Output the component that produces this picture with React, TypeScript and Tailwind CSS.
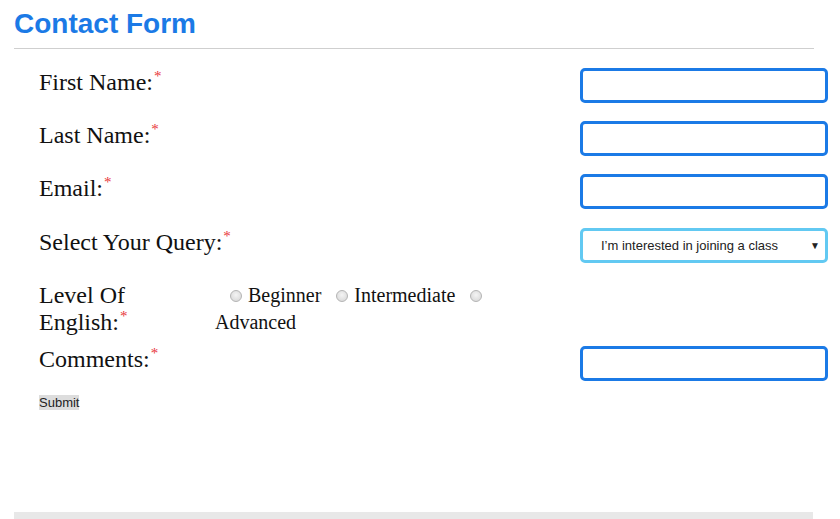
import React from "react";

const Star = () => (
  <span className="relative top-[-9px] ml-[1px] text-[15px] leading-none text-[#e8363a]">*</span>
);

const TextInput = () => (
  <div className="h-[35px] w-[248px] rounded-[5px] border-[3px] border-[#1b7ae6] bg-white" />
);

const Radio = () => (
  <span className="mr-[6px] inline-block h-[12px] w-[12px] rounded-full border border-[#b4b4b4] bg-[radial-gradient(circle_at_50%_40%,#f4f4f4,#d4d4d4)]" />
);

export default function App() {
  const serif = { fontFamily: '"Liberation Serif", "Times New Roman", serif' };
  return (
    <div className="h-[519px] w-[840px] overflow-hidden bg-white" style={{ fontFamily: '"Liberation Sans", Arial, sans-serif' }}>
      <div className="pl-[14px]">
        <h1 className="mt-[8px] text-[28px] font-bold leading-[32px] text-[#1b7ae6]">Contact Form</h1>
        <div className="mt-[8px] h-px w-[800px] bg-[#cfcfcf]" />
      </div>

      <div className="mt-[19px] pl-[39px] pr-[12px] text-[24px] leading-[27px] text-[#111]" style={serif}>
        <div className="flex h-[53px] items-start justify-between">
          <div className="mt-[1px]">First Name:<Star /></div>
          <TextInput />
        </div>
        <div className="flex h-[53px] items-start justify-between">
          <div className="mt-[1px]">Last Name:<Star /></div>
          <TextInput />
        </div>
        <div className="flex h-[54px] items-start justify-between">
          <div className="mt-[1px]">Email:<Star /></div>
          <TextInput />
        </div>
        <div className="flex h-[53px] items-start justify-between">
          <div className="mt-[1px]">Select Your Query:<Star /></div>
          <div className="flex h-[35px] w-[248px] items-center rounded-[5px] border-[3px] border-[#62c9f2] bg-white pl-[18px] pr-[5px] text-[13px] text-[#222]" style={{ fontFamily: '"Liberation Sans", Arial, sans-serif' }}>
            <span className="flex-1">I’m interested in joining a class</span>
            <span className="text-[10px]">▼</span>
          </div>
        </div>
        <div className="flex h-[65px] items-start">
          <div className="mt-[1px] w-[176px]">Level Of<br />English:<Star /></div>
          <div className="mt-[1px] text-[20px] leading-[27px]">
            <div className="flex items-center pl-[15px]">
              <Radio />
              <span className="mr-[15px]">Beginner</span>
              <Radio />
              <span className="mr-[15px]">Intermediate</span>
              <Radio />
            </div>
            <div>Advanced</div>
          </div>
        </div>
        <div className="flex h-[49px] items-start justify-between">
          <div>Comments:<Star /></div>
          <TextInput />
        </div>
        <button className="block h-[15px] bg-[#dddddd] px-0 text-[13px] leading-[15px] text-[#222]" style={{ fontFamily: '"Liberation Sans", Arial, sans-serif' }}>Submit</button>
      </div>

      <div className="ml-[14px] mt-[102px] h-[10px] w-[799px] bg-[#e8e8e8]" />
    </div>
  );
}
